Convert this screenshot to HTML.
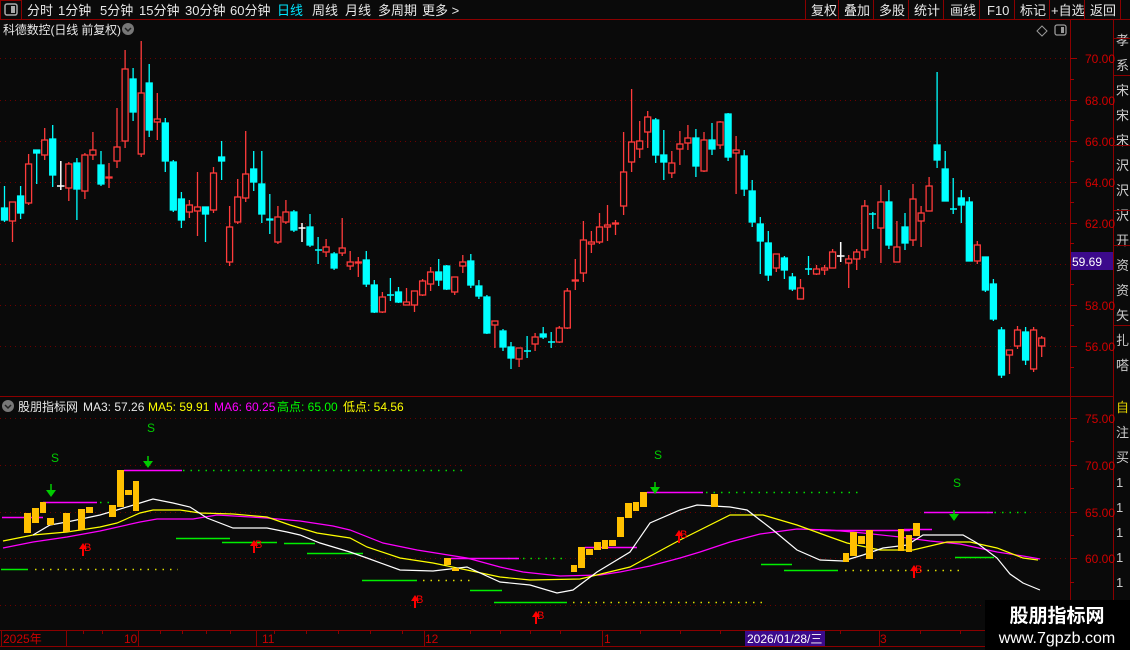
<!DOCTYPE html>
<html><head><meta charset="utf-8"><style>
html,body{margin:0;padding:0;background:#0a0a0a;width:1130px;height:650px;overflow:hidden}
svg{display:block}
text{font-family:"Liberation Sans","Noto Sans CJK SC",sans-serif}
</style></head><body>
<svg width="1130" height="650" viewBox="0 0 1130 650" xmlns="http://www.w3.org/2000/svg">
<rect width="1130" height="650" fill="#0a0a0a"/>
<rect x="0.5" y="0.5" width="21" height="19" fill="none" stroke="#8b0000"/>
<rect x="5" y="4" width="12" height="11" rx="2" fill="none" stroke="#aaa" stroke-width="1.5"/><rect x="11" y="6" width="4" height="7" fill="#aaa"/>
<line x1="0" y1="19.5" x2="1130" y2="19.5" stroke="#8b0000"/>
<g font-size="13" fill="#e8e8e8">
<text x="27" y="15">分时</text><text x="58" y="15">1分钟</text><text x="100" y="15">5分钟</text><text x="139" y="15">15分钟</text><text x="185" y="15">30分钟</text><text x="230" y="15">60分钟</text>
<text x="277" y="15" fill="#00e5ff">日线</text><text x="312" y="15">周线</text><text x="345" y="15">月线</text><text x="378" y="15">多周期</text><text x="422" y="15">更多 &gt;</text>
<text x="811" y="15">复权</text><text x="844" y="15">叠加</text><text x="879" y="15">多股</text><text x="914" y="15">统计</text><text x="950" y="15">画线</text><text x="987" y="15">F10</text><text x="1020" y="15">标记</text><text x="1051" y="15">+自选</text><text x="1090" y="15">返回</text>
</g>
<g stroke="#8b0000"><path d="M805.5 0V19M838.5 0V19M873.5 0V19M908.5 0V19M943.5 0V19M979.5 0V19M1014.5 0V19M1049.5 0V19M1084.5 0V19M1120.5 0V19"/></g>
<text x="3" y="34" font-size="12" fill="#e8e8e8" textLength="118">科德数控(日线 前复权)</text>
<circle cx="128" cy="29" r="6" fill="#777"/><path d="M125 28l3 3 3-3" stroke="#222" fill="none" stroke-width="1.5"/>
<path d="M1042 26l5 5-5 5-5-5z" fill="none" stroke="#999"/>
<rect x="1055" y="25" width="11" height="10" rx="2" fill="none" stroke="#999" stroke-width="1.3"/><rect x="1061" y="27" width="3" height="6" fill="#999"/>
<line x1="1070.5" y1="20" x2="1070.5" y2="646" stroke="#8b0000"/>
<line x1="1113.5" y1="20" x2="1113.5" y2="646" stroke="#8b0000"/>
<g stroke="#6e0000" stroke-dasharray="1,4"><path d="M0 58.5H1070M0 100.5H1070M0 141.5H1070M0 182.5H1070M0 223.5H1070M0 264.5H1070M0 305.5H1070M0 346.5H1070"/></g>
<g stroke="#a00000"><path d="M1070 58.5h7M1070 100.5h7M1070 141.5h7M1070 182.5h7M1070 223.5h7M1070 264.5h7M1070 305.5h7M1070 346.5h7M1070 79.5h4M1070 120.5h4M1070 161.5h4M1070 202.5h4M1070 243.5h4M1070 284.5h4M1070 325.5h4M1070 367.5h4"/></g>
<g font-size="12" fill="#d00000"><text x="1085" y="63">70.00</text><text x="1085" y="105">68.00</text><text x="1085" y="146">66.00</text><text x="1085" y="187">64.00</text><text x="1085" y="228">62.00</text><text x="1085" y="310">58.00</text><text x="1085" y="351">56.00</text></g>
<rect x="1071" y="252" width="42" height="18" fill="#3c0a8c"/><text x="1072" y="266" font-size="12" fill="#fff">59.69</text>
<g font-size="13" fill="#ccc"><text x="1116" y="45">孝</text><text x="1116" y="70">系</text><text x="1116" y="95">宋</text><text x="1116" y="120">宋</text><text x="1116" y="145">宋</text><text x="1116" y="170">沢</text><text x="1116" y="195">沢</text><text x="1116" y="220">沢</text><text x="1116" y="245">开</text><text x="1116" y="270">资</text><text x="1116" y="295">资</text><text x="1116" y="320">矢</text><text x="1116" y="345">扎</text><text x="1116" y="370">嗒</text><text x="1116" y="412" fill="#e0d000">自</text><text x="1116" y="437">注</text><text x="1116" y="462">买</text><text x="1116" y="487">1</text><text x="1116" y="512">1</text><text x="1116" y="537">1</text><text x="1116" y="562">1</text><text x="1116" y="587">1</text></g>
<g stroke="#8b0000"><path d="M1113 38.5h17M1113 75.5h17M1113 145.5h17M1113 210.5h17M1113 245.5h17M1113 325.5h17"/></g>

<g stroke="#ff3b3b" stroke-width="1.3" fill="#0a0a0a">
<path d="M12.5 202V242M28.6 154V205M44.7 128V160M68.8 162V201M84.9 153V199M92.9 132V160M109 163V188M117 108V168M125.1 50V148M141.2 41V157M157.3 93V140M189.4 200V218M197.5 172V236M213.5 167V213M229.6 206V266M237.7 179V224M245.7 131V202M277.9 206V244M285.9 200V224M326.1 239V257M342.2 218V256M350.2 251V270M358.3 257V277M382.4 292V313M406.5 288V305M414.5 291V312M422.6 279V296M430.6 267V291M454.7 277V295M462.8 255V273M494.9 321V348M519.1 348V367M535.1 333V351M559.3 326V343M567.3 288V329M575.3 259V290M583.4 221V282M591.4 231V253M599.5 213V244M607.5 205V241M615.5 220V235M623.6 132V215M631.6 89V172M639.7 121V158M647.7 111V148M671.8 151V178M679.9 131V165M687.9 125V150M704 132V172M720.1 121V149M736.1 136V194M776.3 254V272M800.5 279V299M816.5 265V275M824.6 265V275M832.6 249V268M848.7 255V288M856.7 249V270M864.8 200V258M880.9 185V263M896.9 221V262M913 184V246M921.1 206V247M929.1 177V211M977.3 241V264M1009.5 350V374M1017.5 326V349M1033.6 327V372M1041.7 336V357"/>
<rect x="9.5" y="202" width="6" height="19"/><rect x="25.6" y="164" width="6" height="39"/><rect x="41.7" y="140" width="6" height="15"/><rect x="65.8" y="164" width="6" height="24"/><rect x="81.9" y="155" width="6" height="36"/><rect x="89.9" y="150" width="6" height="5"/><rect x="106" y="177" width="6" height="1"/><rect x="114" y="147" width="6" height="14"/><rect x="122.1" y="69" width="6" height="72"/><rect x="138.2" y="93" width="6" height="61"/><rect x="154.3" y="119" width="6" height="3"/><rect x="186.4" y="205" width="6" height="7"/><rect x="194.5" y="207" width="6" height="4"/><rect x="210.5" y="173" width="6" height="37"/><rect x="226.6" y="227" width="6" height="35"/><rect x="234.7" y="197" width="6" height="25"/><rect x="242.7" y="174" width="6" height="24"/><rect x="274.9" y="217" width="6" height="25"/><rect x="282.9" y="212" width="6" height="10"/><rect x="323.1" y="247" width="6" height="5"/><rect x="339.2" y="248" width="6" height="5"/><rect x="347.2" y="262" width="6" height="4"/><rect x="355.3" y="262" width="6" height="1"/><rect x="379.4" y="297" width="6" height="15"/><rect x="403.5" y="302" width="6" height="3"/><rect x="411.5" y="291" width="6" height="14"/><rect x="419.6" y="281" width="6" height="14"/><rect x="427.6" y="272" width="6" height="12"/><rect x="451.7" y="277" width="6" height="15"/><rect x="459.8" y="262" width="6" height="4"/><rect x="491.9" y="321" width="6" height="4"/><rect x="516.1" y="348" width="6" height="11"/><rect x="532.1" y="337" width="6" height="7"/><rect x="556.3" y="328" width="6" height="14"/><rect x="564.3" y="291" width="6" height="37"/><rect x="572.3" y="280" width="6" height="1"/><rect x="580.4" y="240" width="6" height="33"/><rect x="588.4" y="242" width="6" height="2"/><rect x="596.5" y="227" width="6" height="15"/><rect x="604.5" y="225" width="6" height="2"/><rect x="612.5" y="223" width="6" height="1"/><rect x="620.6" y="172" width="6" height="34"/><rect x="628.6" y="142" width="6" height="20"/><rect x="636.7" y="141" width="6" height="8"/><rect x="644.7" y="117" width="6" height="15"/><rect x="668.8" y="163" width="6" height="10"/><rect x="676.9" y="144" width="6" height="5"/><rect x="684.9" y="138" width="6" height="5"/><rect x="701" y="140" width="6" height="31"/><rect x="717.1" y="122" width="6" height="23"/><rect x="733.1" y="150" width="6" height="3"/><rect x="773.3" y="254" width="6" height="14"/><rect x="797.5" y="288" width="6" height="11"/><rect x="813.5" y="269" width="6" height="5"/><rect x="821.6" y="268" width="6" height="2"/><rect x="829.6" y="252" width="6" height="16"/><rect x="845.7" y="259" width="6" height="4"/><rect x="853.7" y="252" width="6" height="7"/><rect x="861.8" y="206" width="6" height="44"/><rect x="877.9" y="202" width="6" height="26"/><rect x="893.9" y="247" width="6" height="15"/><rect x="910" y="199" width="6" height="41"/><rect x="918.1" y="213" width="6" height="8"/><rect x="926.1" y="186" width="6" height="25"/><rect x="974.3" y="245" width="6" height="16"/><rect x="1006.5" y="350" width="6" height="5"/><rect x="1014.5" y="330" width="6" height="16"/><rect x="1030.6" y="330" width="6" height="39"/><rect x="1038.7" y="338" width="6" height="8"/>
</g>
<g stroke="#00ffff" stroke-width="1.3" fill="#00ffff">
<path d="M4.5 186V222M20.6 186V219M36.7 150V184M52.7 125V187M76.9 158V220M101 151V186M133.1 68V121M149.2 64V137M165.3 118V172M173.3 160V212M181.4 192V228M205.5 207V242M221.6 141V180M253.7 151V191M261.8 151V223M269.8 194V234M293.9 210V232M310 214V247M318.1 237V264M334.1 252V270M366.3 251V287M374.3 280V313M390.4 278V301M398.5 287V303M438.7 259V286M446.7 265V290M470.8 254V288M478.9 280V299M486.9 295V334M503 329V351M511 342V369M527.1 336V358M543.2 327V339M551.2 332V348M655.7 118V163M663.8 130V180M695.9 129V177M712 123V155M728.1 113V161M744.2 150V196M752.2 180V227M760.3 217V274M768.3 231V281M784.4 256V279M792.4 273V291M808.5 256V275M872.8 212V229M888.9 190V249M905 213V250M937.1 72V168M945.2 151V201M953.2 178V214M961.3 190V223M969.3 197V261M985.4 257V292M993.4 279V321M1001.5 327V378M1025.6 327V365"/>
<path stroke-width="1.5" d="M315 250h7M387 295h7M524 351h7M548 342h7M805 269h7M869 214h7M950 209h7"/>
<rect x="1.5" y="208" width="6" height="12"/><rect x="17.6" y="196" width="6" height="17"/><rect x="33.7" y="150" width="6" height="3"/><rect x="49.7" y="139" width="6" height="36"/><rect x="73.9" y="163" width="6" height="26"/><rect x="98" y="165" width="6" height="19"/><rect x="130.1" y="79" width="6" height="33"/><rect x="146.2" y="83" width="6" height="47"/><rect x="162.3" y="123" width="6" height="38"/><rect x="170.3" y="162" width="6" height="48"/><rect x="178.4" y="199" width="6" height="21"/><rect x="202.5" y="207" width="6" height="7"/><rect x="218.6" y="157" width="6" height="4"/><rect x="250.7" y="169" width="6" height="13"/><rect x="258.8" y="184" width="6" height="30"/><rect x="266.8" y="219" width="6" height="1"/><rect x="290.9" y="212" width="6" height="18"/><rect x="307" y="227" width="6" height="18"/><rect x="331.1" y="254" width="6" height="14"/><rect x="363.3" y="260" width="6" height="24"/><rect x="371.3" y="285" width="6" height="27"/><rect x="395.5" y="292" width="6" height="10"/><rect x="435.7" y="272" width="6" height="8"/><rect x="443.7" y="266" width="6" height="23"/><rect x="467.8" y="261" width="6" height="24"/><rect x="475.9" y="286" width="6" height="10"/><rect x="483.9" y="297" width="6" height="36"/><rect x="500" y="331" width="6" height="16"/><rect x="508" y="347" width="6" height="11"/><rect x="540.2" y="334" width="6" height="3"/><rect x="652.7" y="120" width="6" height="35"/><rect x="660.8" y="155" width="6" height="7"/><rect x="692.9" y="138" width="6" height="28"/><rect x="709" y="140" width="6" height="9"/><rect x="725.1" y="114" width="6" height="43"/><rect x="741.2" y="156" width="6" height="33"/><rect x="749.2" y="191" width="6" height="31"/><rect x="757.3" y="224" width="6" height="17"/><rect x="765.3" y="243" width="6" height="32"/><rect x="781.4" y="258" width="6" height="12"/><rect x="789.4" y="277" width="6" height="12"/><rect x="885.9" y="202" width="6" height="43"/><rect x="902" y="227" width="6" height="16"/><rect x="934.1" y="145" width="6" height="15"/><rect x="942.2" y="169" width="6" height="32"/><rect x="958.3" y="198" width="6" height="7"/><rect x="966.3" y="202" width="6" height="59"/><rect x="982.4" y="257" width="6" height="33"/><rect x="990.4" y="284" width="6" height="35"/><rect x="998.5" y="330" width="6" height="45"/><rect x="1022.6" y="332" width="6" height="28"/>
</g>
<g stroke="#fff" stroke-width="1.5"><path d="M60.8 161V190M57 186h7.5M302 223V242M298.5 228h7M840.7 242V262M837 256h7.5"/></g>

<line x1="0" y1="396.5" x2="1113" y2="396.5" stroke="#8b0000"/>
<circle cx="8" cy="406" r="6" fill="#777"/><path d="M5 405l3 3 3-3" stroke="#222" fill="none" stroke-width="1.5"/>
<g font-size="12"><text x="18" y="411" fill="#e8e8e8">股朋指标网</text><text x="83" y="411" fill="#e8e8e8">MA3: 57.26</text><text x="148" y="411" fill="#ffff00">MA5: 59.91</text><text x="214" y="411" fill="#ff00ff">MA6: 60.25</text><text x="277" y="411" fill="#00ff00">高点: 65.00</text><text x="343" y="411" fill="#ffff00">低点: 54.56</text></g>
<g stroke="#6e0000" stroke-dasharray="1,4"><path d="M0 418.5H1070M0 465.5H1070M0 512.5H1070M0 558.5H1070M0 605.5H1070"/></g>
<g stroke="#a00000"><path d="M1070 418.5h7M1070 465.5h7M1070 512.5h7M1070 558.5h7M1070 605.5h7M1070 441.5h4M1070 488.5h4M1070 535.5h4M1070 582.5h4"/></g>
<g font-size="12" fill="#d00000"><text x="1085" y="423">75.00</text><text x="1085" y="470">70.00</text><text x="1085" y="517">65.00</text><text x="1085" y="563">60.00</text></g>
<g stroke-dasharray="1.5,6" stroke-width="1.5">
<path stroke="#00dd00" d="M183 470.5H465M706 492.5H860M987 512.5H1030M508 558.5H568M100 502.5H115"/>
<path stroke="#dddd00" d="M35 569.5H178M423 580.5H475M573 602.5H768M845 570.5H960"/>
</g>
<g stroke-width="1.5">
<path stroke="#ff00ff" d="M2 517.5H43M43 502.5H97M124 470.5H182M451 558.5H519M585 547.5H637M647 492.5H703M904 529.5H932M924 512.5H993M820 530.5H910"/>
<path stroke="#00ee00" d="M1 569.5H28M176 538.5H230M222 542.5H277M284 543.5H315M307 553.5H363M362 580.5H417M470 590.5H502M494 602.5H567M761 564.5H792M784 570.5H838M955 557.5H994"/>
</g>
<polyline fill="none" stroke="#ff00ff" stroke-width="1.2" points="3,548 33,542 67,537 100,531 140,522 157,519 193,519 217,515 267,518 300,521 333,526 350,530 383,543 417,550 467,558 500,567 523,572 560,576 600,575 620,572 650,566 680,558 700,552 730,542 760,534 797,529 830,530 863,533 900,537 930,541 960,544 997,552 1023,556 1040,559"/>
<polyline fill="none" stroke="#ffff00" stroke-width="1.2" points="3,541 33,535 67,532 100,527 117,523 140,513 153,510 180,510 200,513 233,514 267,517 290,525 317,533 350,538 367,547 400,558 433,563 467,570 500,577 530,580 580,579 630,567 680,540 730,515 763,515 797,525 830,537 847,543 880,550 913,550 947,542 970,542 997,548 1023,558 1038,560"/>
<polyline fill="none" stroke="#ffffff" stroke-width="1.2" points="33,535 50,525 67,522 100,515 117,510 140,503 153,499 173,503 190,507 207,518 233,528 253,528 267,528 287,532 300,535 320,543 350,552 367,558 400,570 433,571 467,567 500,582 530,585 557,593 573,590 597,572 630,552 650,523 680,510 697,505 730,507 747,510 773,530 797,550 820,560 843,561 863,555 883,548 907,545 923,535 963,535 977,543 997,558 1010,574 1023,583 1040,590"/>
<g fill="#ffc000">
<rect x="24" y="513" width="7" height="20"/><rect x="32" y="508" width="7" height="15"/><rect x="40" y="502" width="6" height="11"/><rect x="47" y="518" width="7" height="7"/><rect x="63" y="513" width="7" height="19"/><rect x="78" y="509" width="7" height="21"/><rect x="86" y="507" width="7" height="6"/><rect x="109" y="505" width="7" height="12"/><rect x="117" y="470" width="7" height="37"/><rect x="125" y="490" width="7" height="5"/><rect x="133" y="481" width="6" height="30"/><rect x="444" y="558" width="7" height="7"/><rect x="452" y="568" width="7" height="3"/>
<rect x="571" y="565" width="6" height="7"/><rect x="578" y="547" width="7" height="21"/><rect x="586" y="549" width="7" height="6"/><rect x="594" y="542" width="7" height="8"/><rect x="602" y="540" width="6" height="9"/><rect x="609" y="540" width="7" height="6"/><rect x="617" y="517" width="7" height="20"/><rect x="625" y="503" width="7" height="15"/><rect x="633" y="502" width="6" height="9"/><rect x="640" y="492" width="7" height="15"/><rect x="711" y="494" width="7" height="13"/><rect x="843" y="553" width="6" height="9"/><rect x="850" y="532" width="7" height="24"/><rect x="858" y="536" width="7" height="8"/><rect x="866" y="530" width="7" height="29"/><rect x="898" y="529" width="6" height="22"/><rect x="906" y="535" width="6" height="17"/><rect x="913" y="523" width="7" height="13"/>
</g>
<g font-size="12" fill="#00cc00"><text x="51" y="462">S</text><text x="147" y="432">S</text><text x="654" y="459">S</text><text x="953" y="487">S</text></g>
<g fill="#00cc00" stroke="#00cc00" stroke-width="1.5"><path d="M51 484V493M148 456V464M655 482V490M954 510V517"/></g>
<g fill="#00cc00"><path d="M46 490h10l-5 7z M143 461h10l-5 7z M650 487h10l-5 7z M949 514h10l-5 7z"/></g>
<g fill="#ff0000">
<path d="M79 549l4-6 4 6h-3v7h-2v-7z M250 546l4-6 4 6h-3v7h-2v-7z M411 601l4-6 4 6h-3v7h-2v-7z M532 617l4-6 4 6h-3v7h-2v-7z M675 536l4-6 4 6h-3v7h-2v-7z M910 571l4-6 4 6h-3v7h-2v-7z"/>
</g>
<g font-size="11" fill="#ff0000"><text x="84" y="551">B</text><text x="255" y="548">B</text><text x="416" y="603">B</text><text x="537" y="619">B</text><text x="680" y="538">B</text><text x="915" y="573">B</text></g>
<line x1="0" y1="630.5" x2="1113" y2="630.5" stroke="#8b0000"/>
<line x1="0" y1="646.5" x2="1130" y2="646.5" stroke="#8b0000"/>
<g stroke="#8b0000"><path d="M1.5 631v15M66.5 631v15M138.5 631v15M256.5 631v15M424.5 631v15M602.5 631v15M879.5 631v15M83.5 631v3M102.5 631v3M160.5 631v3M182.5 631v3M206.5 631v3M230.5 631v3M274.5 631v3M306.5 631v3M338.5 631v3M370.5 631v3M402.5 631v3M470.5 631v3M500.5 631v3M530.5 631v3M560.5 631v3M640.5 631v3M680.5 631v3M720.5 631v3M760.5 631v3M840.5 631v3M920.5 631v3M960.5 631v3M1000.5 631v3M1040.5 631v3"/></g>
<g font-size="12" fill="#cc0000"><text x="3" y="643">2025年</text><text x="124" y="643">10</text><text x="262" y="643">11</text><text x="425" y="643">12</text><text x="604" y="643">1</text><text x="880" y="643">3</text></g>
<rect x="745" y="631" width="80" height="15" fill="#3c0a8c"/><text x="747" y="643" font-size="12" fill="#fff">2026/01/28/三</text>
<rect x="985" y="600" width="145" height="50" fill="#000"/>
<text x="1057" y="622" font-size="19" font-weight="bold" fill="#fff" text-anchor="middle">股朋指标网</text>
<text x="1057" y="643" font-size="16" fill="#fff" text-anchor="middle">www.7gpzb.com</text>
</svg>
</body></html>
